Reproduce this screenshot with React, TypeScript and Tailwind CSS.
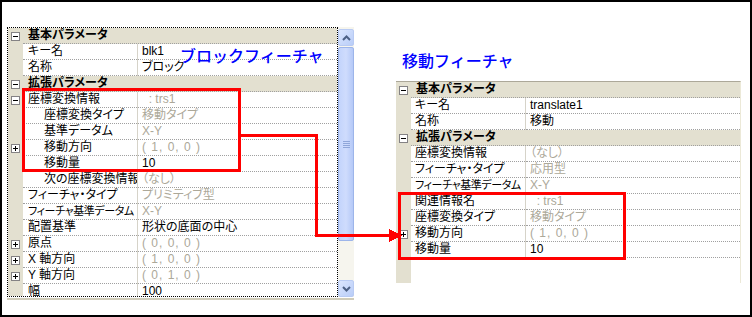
type Row = {
  head?: boolean;
  name: string;
  value?: string;
  dim?: boolean;
  indent?: boolean;
  tight?: boolean;
  box?: "+" | "-";
};

const leftRows: Row[] = [
  { head: true, name: "基本パラメータ" },
  { name: "キー名", value: "blk1" },
  { name: "名称", value: "ブロック" },
  { head: true, name: "拡張パラメータ" },
  { name: "座標変換情報", value: "\u00a0\u00a0: trs1", dim: true, box: "-" },
  { name: "座標変換タイプ", value: "移動タイプ", dim: true, indent: true },
  { name: "基準データム", value: "X-Y", dim: true, indent: true },
  { name: "移動方向", value: "( 1, 0, 0 )", dim: true, indent: true, box: "+" },
  { name: "移動量", value: "10", indent: true },
  { name: "次の座標変換情報", value: "（なし）", dim: true, indent: true },
  { name: "フィーチャ・タイプ", value: "プリミティブ型", dim: true },
  { name: "フィーチャ基準データム", value: "X-Y", dim: true, tight: true },
  { name: "配置基準", value: "形状の底面の中心" },
  { name: "原点", value: "( 0, 0, 0 )", dim: true, box: "+" },
  { name: "X 軸方向", value: "( 1, 0, 0 )", dim: true, box: "+" },
  { name: "Y 軸方向", value: "( 0, 1, 0 )", dim: true, box: "+" },
  { name: "幅", value: "100" },
];

const rightRows: Row[] = [
  { head: true, name: "基本パラメータ" },
  { name: "キー名", value: "translate1" },
  { name: "名称", value: "移動" },
  { head: true, name: "拡張パラメータ" },
  { name: "座標変換情報", value: "（なし）", dim: true },
  { name: "フィーチャ・タイプ", value: "応用型", dim: true },
  { name: "フィーチャ基準データム", value: "X-Y", dim: true, tight: true },
  { name: "関連情報名", value: "\u00a0\u00a0: trs1", dim: true },
  { name: "座標変換タイプ", value: "移動タイプ", dim: true },
  { name: "移動方向", value: "( 1, 0, 0 )", dim: true, box: "+" },
  { name: "移動量", value: "10" },
];

function Box({ sign }: { sign: "+" | "-" }) {
  return (
    <span className="relative block w-[9px] h-[9px] border border-[#848284] bg-white">
      <span className="absolute left-[1px] top-[3px] w-[5px] h-[1px] bg-black" />
      {sign === "+" && (
        <span className="absolute left-[3px] top-[1px] w-[1px] h-[5px] bg-black" />
      )}
    </span>
  );
}

function PropRow({ row, valueW, pad }: { row: Row; valueW: string; pad: string }) {
  if (row.head) {
    return (
      <div className="flex h-4 shrink-0 bg-[#e3e0d0]">
        <div className="w-[15px] shrink-0 flex items-center justify-center">
          <Box sign="-" />
        </div>
        <div className="flex-1 border-b border-dotted border-[#a0a0a0] pl-[5px] font-bold leading-[15px]">
          {row.name}
        </div>
      </div>
    );
  }
  const vec = row.value?.startsWith("(");
  return (
    <div className="flex h-4 shrink-0">
      <div className="w-[15px] shrink-0 bg-[#e3e0d0] flex items-center justify-center">
        {row.box && <Box sign={row.box} />}
      </div>
      <div
        className={`w-[114px] shrink-0 overflow-hidden whitespace-nowrap border-b border-dotted border-[#a0a0a0] leading-[15px] ${
          row.indent ? "pl-[21px]" : pad
        } ${row.tight ? "text-[11px] tracking-[-0.4px]" : ""}`}
      >
        {row.name}
      </div>
      <div className="w-[1px] shrink-0 bg-[#d6d3c9]" />
      <div
        className={`${valueW} shrink-0 overflow-hidden whitespace-nowrap border-b border-dotted border-[#a0a0a0] pl-[4px] leading-[15px] ${
          row.dim ? "text-[#aca899]" : "text-black"
        } ${vec ? "tracking-[1px]" : ""}`}
      >
        {row.value}
      </div>
    </div>
  );
}

function Chevron({ up }: { up?: boolean }) {
  return (
    <svg width="9" height="6" viewBox="0 0 9 6">
      <polyline
        points={up ? "1,5 4.5,1.5 8,5" : "1,1 4.5,4.5 8,1"}
        fill="none"
        stroke="#4d6185"
        strokeWidth="2"
      />
    </svg>
  );
}

function ScrollBar() {
  return (
    <div className="w-[16px] h-[270px] flex flex-col bg-[#f6f5ee] pt-[2px]">
      <div className="h-[17px] rounded-[2px] border border-[#b9cbf3] bg-gradient-to-br from-[#dbe6fe] to-[#b9cdf8] flex items-center justify-center">
        <Chevron up />
      </div>
      <div className="mt-[1px] h-[194px] rounded-[2px] border border-[#9db5ea] bg-gradient-to-r from-[#c3d4fc] via-[#cfdcfd] to-[#b5c9f7] flex flex-col items-center justify-center gap-[1px]">
        <span className="w-[7px] h-[1px] bg-[#8fa6d9]" />
        <span className="w-[7px] h-[1px] bg-[#8fa6d9]" />
        <span className="w-[7px] h-[1px] bg-[#8fa6d9]" />
        <span className="w-[7px] h-[1px] bg-[#8fa6d9]" />
      </div>
      <div className="flex-1" />
      <div className="h-[17px] rounded-[2px] border border-[#b9cbf3] bg-gradient-to-br from-[#dbe6fe] to-[#b9cdf8] flex items-center justify-center">
        <Chevron />
      </div>
    </div>
  );
}

export default function App() {
  return (
    <div className="relative w-[752px] h-[317px] overflow-hidden border-2 border-black bg-white text-[12px] text-black font-['Liberation_Sans','Noto_Sans_CJK_JP',sans-serif] [font-feature-settings:'palt']">
      <div className="flex">
        {/* block feature grid */}
        <div className="ml-[5px] mt-[25px] w-[347px]">
          <div className="flex">
            <div className="w-[331px] h-[270px] border border-dotted border-black overflow-hidden flex flex-col">
              {leftRows.map((r, i) => (
                <PropRow key={i} row={r} valueW="w-[199px]" pad="pl-[5px]" />
              ))}
            </div>
            <ScrollBar />
          </div>
          <div className="mt-[1px] h-[2px] bg-[#d0ccba]" />
        </div>

        {/* move feature */}
        <div className="ml-[42px]">
          <div className="mt-[52px] ml-[6px] text-[16px] leading-[16px] text-[#0000ff] font-medium [font-feature-settings:normal]">
            移動フィーチャ
          </div>
          <div className="mt-[11px] w-[345px] h-[202px] border-t border-[#aca899] border-r border-r-[#ece9d8] flex flex-col">
            {rightRows.map((r, i) => (
              <PropRow key={i} row={r} valueW="w-[214px]" pad="pl-[4px]" />
            ))}
            <div className="flex-1 flex">
              <div className="w-[15px] bg-[#e3e0d0]" />
            </div>
          </div>
        </div>
      </div>

      <div className="absolute left-[178px] top-[47px] text-[16px] leading-[16px] text-[#0000ff] font-medium [font-feature-settings:normal]">
        ブロックフィーチャ
      </div>

      <svg
        className="absolute -left-[2px] -top-[2px] pointer-events-none"
        width="752"
        height="317"
        viewBox="0 0 752 317"
        shapeRendering="crispEdges"
      >
        <rect x="23.5" y="89.5" width="216" height="81" fill="none" stroke="#ff0000" strokeWidth="3" />
        <rect x="399.5" y="193.5" width="225" height="65" fill="none" stroke="#ff0000" strokeWidth="3" />
        <polyline
          points="240,135.5 316.5,135.5 316.5,235.5 392,235.5"
          fill="none"
          stroke="#ff0000"
          strokeWidth="3"
        />
        <polygon points="389,229 402,235.5 389,242" fill="#ff0000" />
      </svg>
    </div>
  );
}
